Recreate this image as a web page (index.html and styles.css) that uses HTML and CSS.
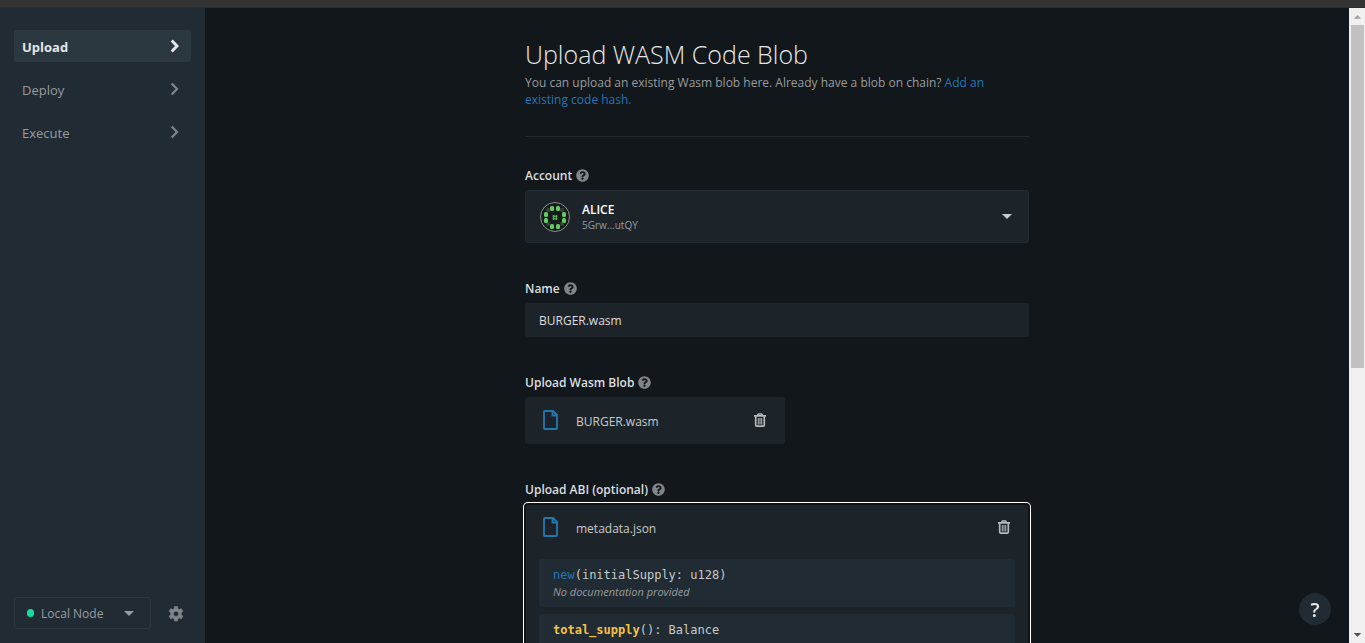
FILE: index.html
```html
<!DOCTYPE html>
<html lang="en">
<head>
<meta charset="utf-8">
<meta name="viewport" content="width=device-width, initial-scale=1">
<title>Upload WASM Code Blob</title>
<link rel="stylesheet" href="styles.css">
</head>
<body>
<svg class="sprite" aria-hidden="true">
  <symbol id="help" viewBox="0 0 512 512"><path fill="currentColor" d="M504 256c0 137-111 248-248 248S8 393 8 256 119 8 256 8s248 111 248 248zM262.700 90c-54.500 0-89.300 23-116.500 63.800-3.500 5.300-2.400 12.400 2.700 16.300l34.700 26.300c5.200 3.900 12.600 3 16.700-2.100 17.900-22.700 30.100-35.800 57.300-35.800 20.400 0 45.700 13.100 45.700 33 0 15-12.400 22.700-32.500 34C247.100 238.500 216 254.900 216 296v4c0 6.600 5.400 12 12 12h56c6.600 0 12-5.400 12-12v-1.300c0-28.500 83.200-29.600 83.200-106.700 0-58-60.200-102-116.500-102zM256 338c-25.400 0-46 20.600-46 46s20.600 46 46 46 46-20.600 46-46-20.600-46-46-46z"/></symbol>
  <symbol id="chevron" viewBox="0 0 16 16"><path d="M4.700 2.500L10 8l-5.300 5.500" fill="none" stroke="currentColor" stroke-width="2.200"/></symbol>
  <symbol id="chevron-bold" viewBox="0 0 16 16"><path d="M4.700 2.500L10 8l-5.300 5.500" fill="none" stroke="currentColor" stroke-width="2.900"/></symbol>
  <symbol id="file" viewBox="0 0 15 20"><path d="M1 2q0-1 1-1h8l4 4v13q0 1-1 1H2q-1 0-1-1zM9.500 1v4.500H14" fill="none" stroke="currentColor" stroke-width="1.900"/></symbol>
  <symbol id="trash" viewBox="0 0 12 14"><path d="M0 2.800h12M3.700 2.500L4.500 1h3l.8 1.500M1.700 3v9q0 1.200 1.200 1.200h6.200q1.200 0 1.200-1.200V3" fill="none" stroke="currentColor" stroke-width="1.700"/><path d="M4.300 5v6.500M6 5v6.500M7.700 5v6.500" fill="none" stroke="currentColor" stroke-width="1"/></symbol>
  <symbol id="caret" viewBox="0 0 10 5"><path d="M0 0h10L5 5z" fill="currentColor"/></symbol>
  <symbol id="gear" viewBox="0 0 16 16"><path fill="currentColor" stroke="currentColor" stroke-width=".6" stroke-linejoin="round" fill-rule="evenodd" d="M6.500.5h3l.4 2.200 1.400.8 2.100-.8 1.500 2.600-1.700 1.500v1.900l1.700 1.500-1.500 2.600-2.100-.8-1.400.8-.4 2.200h-3l-.4-2.200-1.400-.8-2.100.8-1.500-2.600 1.700-1.500V6.800L1.100 5.300l1.500-2.600 2.100.8 1.400-.8zM8 5.200a2.600 2.600 0 100 5.200 2.600 2.600 0 000-5.200z"/></symbol>
</svg>
<div class="topbar"></div>
<div class="app">
  <aside class="sidebar">
    <nav class="nav">
      <a class="nav-item active" href="#upload">Upload<svg class="chevron"><use href="#chevron-bold"/></svg></a>
      <a class="nav-item" href="#deploy">Deploy<svg class="chevron"><use href="#chevron"/></svg></a>
      <a class="nav-item" href="#execute">Execute<svg class="chevron"><use href="#chevron"/></svg></a>
    </nav>
    <div class="node-bar">
      <button class="node-select" type="button"><span class="dot"></span><span>Local Node</span><svg class="caret"><use href="#caret"/></svg></button>
      <button class="icon-button" type="button" aria-label="Settings"><svg class="gear"><use href="#gear"/></svg></button>
    </div>
  </aside>
  <main class="main">
    <div class="content">
      <header class="intro">
        <h1>Upload WASM Code Blob</h1>
        <p>You can upload an existing Wasm blob here. Already have a blob on chain? <a href="#hash">Add an existing code hash.</a></p>
      </header>
      <section class="field">
        <div class="label"><span id="account-label">Account</span><svg class="help"><use href="#help"/></svg></div>
        <button class="account" type="button" aria-labelledby="account-label account-name">
          <svg class="identicon" viewBox="0 0 30 30" aria-hidden="true">
            <circle cx="15" cy="15" r="14.500" fill="#181c1f" stroke="#8a8d8f"/>
            <g fill="#39443f"><circle cx="8" cy="8" r="2"/><circle cx="22" cy="8" r="2"/><circle cx="8" cy="22" r="2"/><circle cx="22" cy="22" r="2"/></g>
            <g fill="#62cb62"><rect x="10" y="4" width="4" height="5" rx="1.500"/><rect x="16" y="4" width="4" height="5" rx="1.500"/><rect x="10" y="22" width="4" height="5" rx="1.500"/><rect x="16" y="22" width="4" height="5" rx="1.500"/><rect x="4" y="10" width="4" height="5" rx="1.500"/><rect x="4" y="16" width="4" height="5" rx="1.500"/><rect x="22" y="10" width="4" height="5" rx="1.500"/><rect x="22" y="16" width="4" height="5" rx="1.500"/></g>
            <path d="M13.700 13v5M16.300 13v5M12.500 14.200h5M12.500 16.800h5" stroke="#62cb62"/>
          </svg>
          <span class="account-text"><span class="account-name" id="account-name">ALICE</span><span class="account-address">5Grw...utQY</span></span>
          <svg class="caret light"><use href="#caret"/></svg>
        </button>
      </section>
      <section class="field">
        <div class="label"><label for="name">Name</label><svg class="help"><use href="#help"/></svg></div>
        <input class="text-input" id="name" type="text" value="BURGER.wasm">
      </section>
      <section class="field">
        <div class="label"><span>Upload Wasm Blob</span><svg class="help"><use href="#help"/></svg></div>
        <div class="file-card small">
          <div class="file-row"><svg class="file"><use href="#file"/></svg><span>BURGER.wasm</span><button class="icon-button light" type="button" aria-label="Remove BURGER.wasm"><svg class="trash"><use href="#trash"/></svg></button></div>
        </div>
      </section>
      <section class="field">
        <div class="label"><span>Upload ABI (optional)</span><svg class="help"><use href="#help"/></svg></div>
        <div class="file-card focused">
          <div class="file-row"><svg class="file"><use href="#file"/></svg><span>metadata.json</span><button class="icon-button light" type="button" aria-label="Remove metadata.json"><svg class="trash"><use href="#trash"/></svg></button></div>
          <ul class="messages">
            <li><code><span class="constructor">new</span>(initialSupply: u128)</code><em>No documentation provided</em></li>
            <li><code><b>total_supply</b>(): Balance</code></li>
          </ul>
        </div>
      </section>
    </div>
  </main>
  <div class="scrollbar" aria-hidden="true">
    <svg class="arrow" viewBox="0 0 17 17"><path d="M5 11h8L9 7z" fill="#a3a3a3"/></svg>
    <div class="track"><div class="thumb"></div></div>
    <svg class="arrow" viewBox="0 0 17 17"><path d="M5 7h8l-4 4z" fill="#505050"/></svg>
  </div>
</div>
<button class="help-button" type="button" aria-label="Help">?</button>
</body>
</html>
```

FILE: styles.css
```css
* { box-sizing: border-box; }

body {
  margin: 0;
  height: 100vh;
  display: flex;
  flex-direction: column;
  overflow: hidden;
  background: #11171a;
  color: #dcdee0;
  font: 12px/17px "Open Sans", "Noto Sans", sans-serif;
}

button, input { font: inherit; color: inherit; }
button { border: 0; padding: 0; background: none; cursor: pointer; }
a { color: #2375bb; text-decoration: none; }
svg { display: block; flex: none; }
.sprite { position: absolute; width: 0; height: 0; }

.topbar { flex: none; height: 8px; background: #333; border-bottom: 1px solid #292a2b; }
.app { flex: 1; min-height: 0; display: flex; }

.sidebar {
  flex: none;
  width: 205px;
  padding: 22px 14px 14px;
  display: flex;
  flex-direction: column;
  justify-content: space-between;
  background: #212b33;
}
.nav { display: flex; flex-direction: column; gap: 11px; }
.nav-item {
  height: 32px;
  padding: 2px 8px 0;
  display: flex;
  align-items: center;
  justify-content: space-between;
  border-radius: 3px;
  color: #999c9f;
  font-size: 13px;
}
.nav-item.active { background: #2c383f; color: #e4e6e8; font-weight: 700; }
.chevron { width: 16px; height: 16px; margin-bottom: 2px; color: #818589; }
.active .chevron { color: #e4e6e8; }

.node-bar { display: flex; align-items: center; gap: 17px; }
.node-select {
  width: 137px;
  height: 32px;
  padding: 0 16px 0 12px;
  display: flex;
  align-items: center;
  gap: 7px;
  border: 1px solid #2c383f;
  border-radius: 3px;
  color: #999c9f;
}
.dot { width: 7px; height: 8px; border-radius: 4px; background: #18dc9c; }
.caret { width: 10px; height: 5px; margin-left: auto; color: #999c9f; }
.caret.light { color: #c8cacc; }
.icon-button { color: #818589; }
.icon-button.light { margin-left: auto; color: #b5b9bc; }
.gear { width: 16px; height: 16px; margin-top: 2px; }

.main { flex: 1; min-width: 0; overflow: hidden; }
.content { max-width: 504px; margin: 0 auto; padding-top: 28px; }
.intro { height: 101px; border-bottom: 1px solid #23292d; }
h1 { margin: 0; padding-bottom: 2px; font-size: 25px; line-height: 36px; font-weight: 300; color: #e4e6e8; }
p { margin: 0; color: #999c9f; }

.field { margin-top: 37px; }
.intro + .field { margin-top: 30px; }
.label {
  height: 23px;
  padding-bottom: 6px;
  display: flex;
  align-items: center;
  gap: 4px;
  font-weight: 600;
}
.help { width: 13px; height: 13px; color: #818589; }
.account {
  width: 100%;
  height: 53px;
  padding: 0 16px 0 14px;
  display: flex;
  align-items: center;
  gap: 12px;
  border: 1px solid #222c34;
  border-radius: 3px;
  background: #1d2429;
  text-align: left;
}
.identicon { width: 30px; height: 30px; }
.account-text { display: flex; flex-direction: column; }
.account-name { color: #fff; font-weight: 600; line-height: 16px; }
.account-address { color: #999c9f; font-size: 10px; line-height: 14px; }

.text-input {
  display: block;
  width: 100%;
  height: 34px;
  padding: 0 14px;
  border: 0;
  border-radius: 3px;
  background: #1d2429;
}
.file-card { border-radius: 3px; background: #1d2429; }
.file-card.small { max-width: 260px; }
.file-card.focused { border: 1px solid #101214; box-shadow: 0 0 0 1px #101214, 0 0 0 2px #fff; }
.file-row { height: 47px; padding: 2px 19px 0 18px; display: flex; align-items: center; gap: 18px; color: #c8cacc; }
.focused .file-row { height: 46px; padding: 0 18px 0 17px; }
.file { width: 15px; height: 20px; margin-bottom: 3px; color: #2375ac; }
.trash { width: 12px; height: 14px; margin-bottom: 3px; }

.messages { margin: 0; padding: 8px 13px; display: flex; flex-direction: column; gap: 7px; list-style: none; }
.messages li { height: 48px; padding: 8px 14px; border-radius: 3px; background: #212b33; }
.messages code { display: block; color: #c8cacc; font: 12px/17px "DejaVu Sans Mono", monospace; }
.messages em { display: block; color: #999c9f; font-size: 11px; line-height: 15px; }
.constructor { color: #2375bb; }
.messages b { color: #f6c244; }

.scrollbar { flex: none; width: 16px; display: flex; flex-direction: column; background: #f0f0f0; }
.arrow { width: 16px; height: 17px; }
.track { flex: 1; padding: 0 1px 0 2px; }
.thumb { height: 57%; background: #c1c1c1; }

.help-button {
  position: fixed;
  right: 34px;
  bottom: 18px;
  width: 32px;
  height: 32px;
  border-radius: 50%;
  background: #212b33;
  color: #e4e6e8;
  font-size: 20px;
  font-weight: 600;
}
```
